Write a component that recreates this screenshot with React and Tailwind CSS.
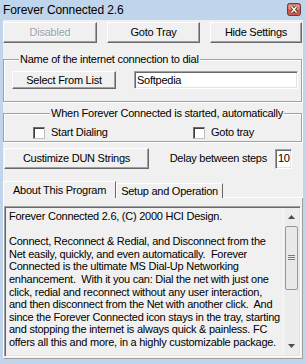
import React from 'react';

const raised =
  'bg-[#f0f0f0] border border-t-white border-l-white border-r-[#696969] border-b-[#696969] shadow-[inset_-1px_-1px_0_#a0a0a0]';
const sunken =
  'bg-white border border-t-[#a0a0a0] border-l-[#a0a0a0] border-r-white border-b-white shadow-[inset_1px_1px_0_#696969,inset_-1px_-1px_0_#e3e3e3]';
const etched = 'border border-[#a0a0a0] shadow-[inset_1px_1px_0_#fff,1px_1px_0_#fff]';

const lines = [
  'Forever Connected 2.6, (C) 2000 HCI Design.',
  '',
  'Connect, Reconnect & Redial, and Disconnect from the',
  'Net easily, quickly, and even automatically.  Forever',
  'Connected is the ultimate MS Dial-Up Networking',
  'enhancement.  With it you can: Dial the net with just one',
  'click, redial and reconnect without any user interaction,',
  'and then disconnect from the Net with another click.  And',
  'since the Forever Connected icon stays in the tray, starting',
  'and stopping the internet is always quick & painless. FC',
  'offers all this and more, in a highly customizable package.',
];

function Checkbox({ label }) {
  return (
    <div className="flex items-center gap-[6px]">
      <span className="w-[12px] h-[12px] bg-white border border-t-[#6d6d6d] border-l-[#6d6d6d] border-r-[#c0c0c0] border-b-[#c0c0c0] shadow-[inset_1px_1px_0_#404040]" />
      <span>{label}</span>
    </div>
  );
}

export default function App() {
  return (
    <div
      className="w-[306px] h-[364px] bg-[#c0d5ec] flex flex-col overflow-hidden text-black"
      style={{ fontFamily: '"Liberation Sans", Arial, sans-serif' }}
    >
      {/* title bar */}
      <div className="h-[20px] shrink-0 flex items-center justify-between pl-[3px] pr-[5px] bg-[#bfd5ec]">
        <div className="text-[12px] leading-none tracking-[-0.1px] whitespace-nowrap">Forever Connected 2.6</div>
        <svg width="14" height="13" viewBox="0 0 14 13" className="block shrink-0 -mt-[2px]">
          <rect x="0.5" y="0.5" width="13" height="12" rx="2" fill="#c85848" stroke="#6b3a36" />
          <rect x="1.5" y="1.5" width="11" height="5" rx="1" fill="#e29486" />
          <path d="M4.5 3.5L9.5 9.5M9.5 3.5L4.5 9.5" stroke="#4a1d17" strokeWidth="3" />
          <path d="M4.5 3.5L9.5 9.5M9.5 3.5L4.5 9.5" stroke="#ffffff" strokeWidth="1.5" />
        </svg>
      </div>

      <div className="mx-[3px] h-[339px] shrink-0 bg-[#f0f0f0] flex flex-col text-[11px] leading-[13px] tracking-[-0.25px]">
        {/* top buttons */}
        <div className="mt-[2px] flex justify-between pr-[1px]">
          <button className={`${raised} w-[94px] h-[21px] text-[#a0a0a0] [text-shadow:1px_1px_0_#fff]`}>Disabled</button>
          <button className={`${raised} w-[93px] h-[21px]`}>Goto Tray</button>
          <button className={`${raised} w-[92px] h-[21px]`}>Hide Settings</button>
        </div>

        {/* connection group */}
        <fieldset className={`${etched} mt-[10px] mr-[1px] pl-[8px] pr-[3px] pb-[12px]`}>
          <legend className="ml-[7px] px-[1px] bg-[#f0f0f0]">Name of the internet connection to dial</legend>
          <div className="mt-[5px] flex items-center">
            <button className={`${raised} w-[104px] h-[18px]`}>Select From List</button>
            <div className={`${sunken} ml-[18px] flex-1 h-[18px] px-[2px] flex items-center`}>Softpedia</div>
          </div>
        </fieldset>

        {/* startup group */}
        <fieldset className={`${etched} mt-[5px] mr-[1px] pl-[29px] pb-[2px]`}>
          <legend className="mx-auto px-[1px] bg-[#f0f0f0]">When Forever Connected is started, automatically</legend>
          <div className="mt-[6px] flex">
            <div className="w-[160px]">
              <Checkbox label="Start Dialing" />
            </div>
            <Checkbox label="Goto tray" />
          </div>
        </fieldset>

        {/* DUN / delay row */}
        <div className="mt-[6px] flex items-center">
          <button className={`${raised} ml-[1px] w-[145px] h-[21px]`}>Custimize DUN Strings</button>
          <span className="ml-auto">Delay between steps</span>
          <div className={`${sunken} ml-[8px] mr-[11px] w-[17px] h-[20px] pl-[2px] flex items-center`}>10</div>
        </div>

        {/* tabs */}
        <div className="mt-[12px] flex items-end h-[17px]">
          <div className="h-[17px] px-[9px] pt-[2px] bg-[#f0f0f0] border border-b-0 border-t-white border-l-white border-r-[#696969] relative z-10">
            About This Program
          </div>
          <div className="h-[15px] px-[4px] pt-[1px] border border-b-0 border-t-white border-l-white border-r-[#696969]">
            Setup and Operation
          </div>
          <div className="flex-1 border-b border-white" />
        </div>

        {/* tab panel */}
        <div className="flex-1 flex flex-col border-l border-white border-r border-r-[#a0a0a0] pt-[8px] pr-[1px]">
          <div className="flex-1 flex bg-[#f0f0f0] border border-t-[#a0a0a0] border-l-[#a0a0a0] border-r-white border-b-white shadow-[inset_1px_1px_0_#696969,inset_-1px_-1px_0_#e3e3e3] p-[1px]">
            <div className="flex-1 pl-[3px] pt-[2px] leading-[12.6px] overflow-hidden">
              {lines.map((l, i) => (
                <div key={i} className="whitespace-pre h-[12.6px]">
                  {l}
                </div>
              ))}
            </div>
            {/* scrollbar */}
            <div className="w-[16px] flex flex-col bg-[#ececec] border-l border-[#f7f7f7]">
              <div className="h-[18px] flex items-center justify-center">
                <svg width="7" height="4" viewBox="0 0 7 4">
                  <path d="M0 4L3.5 0L7 4Z" fill="#4d4d4d" />
                </svg>
              </div>
              <div className="h-[64px] mx-[1px] rounded-[2px] border border-[#979797] bg-[#e8e8e8] flex items-center justify-center">
                <svg width="7" height="6" viewBox="0 0 7 6">
                  <path d="M0 0.5H7M0 2.5H7M0 4.5H7" stroke="#7a7a7a" strokeWidth="1" />
                </svg>
              </div>
              <div className="flex-1" />
              <div className="h-[18px] flex items-center justify-center">
                <svg width="7" height="4" viewBox="0 0 7 4">
                  <path d="M0 0L3.5 4L7 0Z" fill="#4d4d4d" />
                </svg>
              </div>
            </div>
          </div>
        </div>
        <div className="h-[2px] border-b border-[#a0a0a0] border-l border-l-white border-r border-r-[#a0a0a0]" />
      </div>
    </div>
  );
}
